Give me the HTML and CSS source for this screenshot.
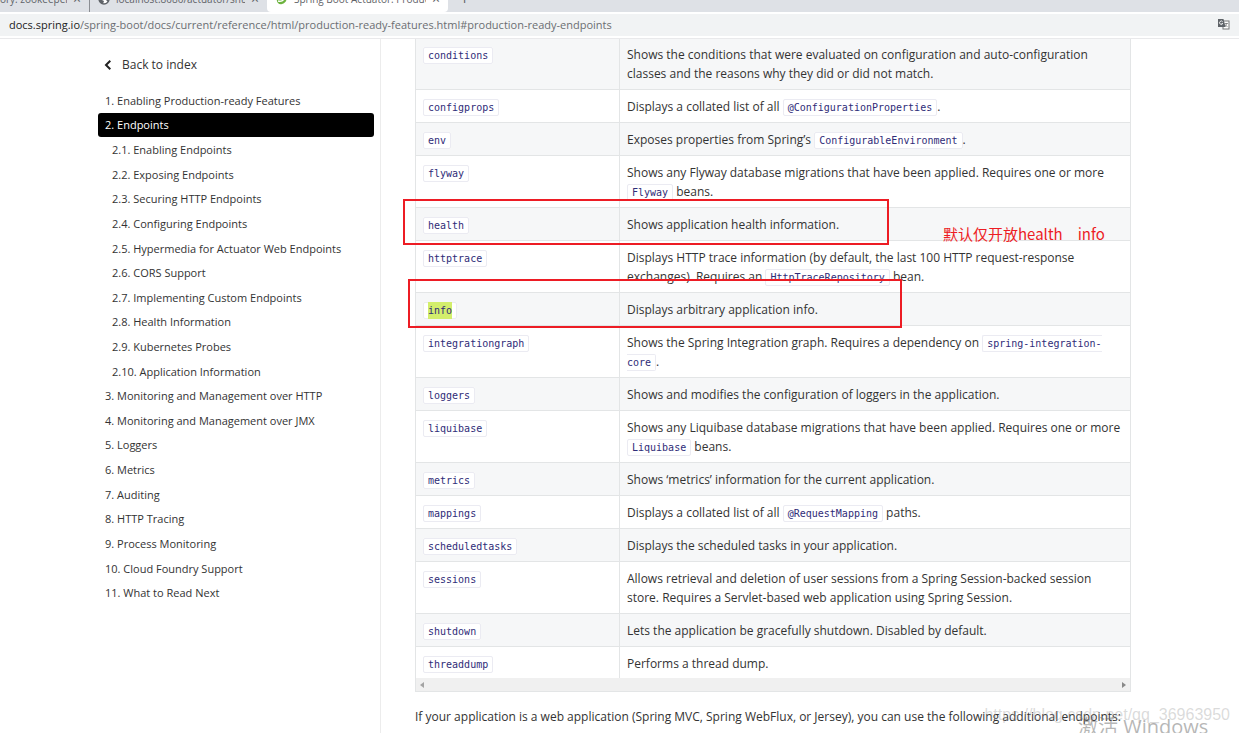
FILE: index.html
```html
<!DOCTYPE html>
<html lang="en">
<head>
<meta charset="utf-8">
<title>Spring Boot Actuator: Production-ready Features</title>
<link rel="stylesheet" href="styles.css">
</head>
<body>
<header class="browser">
  <div class="tabs">
    <div class="tab tab-first"><span class="tab-title">ory: zookeeper</span><span class="close">×</span></div>
    <div class="tab tab-second">
      <svg class="favicon" viewBox="0 0 12 12"><circle cx="6" cy="6" r="5" fill="#fff" stroke="#5f6368" stroke-width="1.4"/><path d="M1 4 L4 7 L6 8 L5 11 A5 5 0 0 1 1 5Z M6 1 L9 2 L11 5 L10 9 L8 7 L7 5 L5 4Z" fill="#5f6368"/></svg>
      <span class="tab-title">localhost:8080/actuator/shutd</span><span class="close">×</span>
    </div>
    <div class="tab tab-active">
      <svg class="favicon" viewBox="0 0 12 12"><path d="M10 1 C12 6 10 10 6 11 C3 12 0 9 1 6 C1 3 4 1 6 2 C8 3 9 2 10 1Z" fill="#6db33f"/><path d="M2 8 C6 9 8 7 9 4" fill="none" stroke="#fff" stroke-width="1.4"/></svg>
      <span class="tab-title">Spring Boot Actuator: Product</span><span class="close">×</span>
    </div>
    <span class="new-tab">+</span>
  </div>
  <div class="address">
    <span class="url"><b class="host">docs.spring.io</b>/spring-boot/docs/current/reference/html/production-ready-features.html#production-ready-endpoints</span>
    <svg class="translate" viewBox="0 0 12 12"><rect x="5" y="3" width="6" height="8" fill="#fff" stroke="#777"/><path d="M6.500 5.500H10M8.500 5C8.500 7 7.500 8 6.500 9M7 6.500L9.500 9" stroke="#777" stroke-width=".8" fill="none"/><path d="M0 1H5.500L7.500 9H0Z" fill="#5f6368"/><path d="M4.700 3.800A1.700 1.700 0 1 0 4.800 5.500H3.500" fill="none" stroke="#fff" stroke-width=".9"/></svg>
  </div>
</header>

<div class="page">
  <nav class="sidebar">
    <a class="back" href="#"><svg class="chevron" viewBox="0 0 8 10"><path d="M6.300 .8L2 5L6.300 9.200" fill="none" stroke="#222" stroke-width="2"/></svg>Back to index</a>
    <ul class="toc">
      <li><a href="#">1. Enabling Production-ready Features</a></li>
      <li class="current"><a href="#">2. Endpoints</a></li>
      <li class="sub"><a href="#">2.1. Enabling Endpoints</a></li>
      <li class="sub"><a href="#">2.2. Exposing Endpoints</a></li>
      <li class="sub"><a href="#">2.3. Securing HTTP Endpoints</a></li>
      <li class="sub"><a href="#">2.4. Configuring Endpoints</a></li>
      <li class="sub"><a href="#">2.5. Hypermedia for Actuator Web Endpoints</a></li>
      <li class="sub"><a href="#">2.6. CORS Support</a></li>
      <li class="sub"><a href="#">2.7. Implementing Custom Endpoints</a></li>
      <li class="sub"><a href="#">2.8. Health Information</a></li>
      <li class="sub"><a href="#">2.9. Kubernetes Probes</a></li>
      <li class="sub"><a href="#">2.10. Application Information</a></li>
      <li><a href="#">3. Monitoring and Management over HTTP</a></li>
      <li><a href="#">4. Monitoring and Management over JMX</a></li>
      <li><a href="#">5. Loggers</a></li>
      <li><a href="#">6. Metrics</a></li>
      <li><a href="#">7. Auditing</a></li>
      <li><a href="#">8. HTTP Tracing</a></li>
      <li><a href="#">9. Process Monitoring</a></li>
      <li><a href="#">10. Cloud Foundry Support</a></li>
      <li><a href="#">11. What to Read Next</a></li>
    </ul>
  </nav>

  <main class="content">
    <div class="table-wrap">
      <table class="endpoints">
        <tbody>
          <tr><td><code>conditions</code></td><td>Shows the conditions that were evaluated on configuration and auto-configuration classes and the reasons why they did or did not match.</td></tr>
          <tr><td><code>configprops</code></td><td>Displays a collated list of all <code>@ConfigurationProperties</code>.</td></tr>
          <tr><td><code>env</code></td><td>Exposes properties from Spring’s <code>ConfigurableEnvironment</code>.</td></tr>
          <tr><td><code>flyway</code></td><td>Shows any Flyway database migrations that have been applied. Requires one or more <code>Flyway</code> beans.</td></tr>
          <tr><td><code>health</code></td><td>Shows application health information.</td></tr>
          <tr><td><code>httptrace</code></td><td>Displays HTTP trace information (by default, the last 100 HTTP request-response exchanges). Requires an <code>HttpTraceRepository</code> bean.</td></tr>
          <tr><td><code><mark>info</mark></code></td><td>Displays arbitrary application info.</td></tr>
          <tr><td><code>integrationgraph</code></td><td>Shows the Spring Integration graph. Requires a dependency on <code>spring-integration-core</code>.</td></tr>
          <tr><td><code>loggers</code></td><td>Shows and modifies the configuration of loggers in the application.</td></tr>
          <tr><td><code>liquibase</code></td><td>Shows any Liquibase database migrations that have been applied. Requires one or more <code>Liquibase</code> beans.</td></tr>
          <tr><td><code>metrics</code></td><td>Shows ‘metrics’ information for the current application.</td></tr>
          <tr><td><code>mappings</code></td><td>Displays a collated list of all <code>@RequestMapping</code> paths.</td></tr>
          <tr><td><code>scheduledtasks</code></td><td>Displays the scheduled tasks in your application.</td></tr>
          <tr><td><code>sessions</code></td><td>Allows retrieval and deletion of user sessions from a Spring Session-backed session store. Requires a Servlet-based web application using Spring Session.</td></tr>
          <tr><td><code>shutdown</code></td><td>Lets the application be gracefully shutdown. Disabled by default.</td></tr>
          <tr><td><code>threaddump</code></td><td>Performs a thread dump.</td></tr>
        </tbody>
      </table>
      <div class="hscroll">
        <svg class="arrow" viewBox="0 0 4 6"><path d="M4 0V6L0 3Z" fill="#a3a3a3"/></svg>
        <svg class="arrow" viewBox="0 0 4 6"><path d="M0 0V6L4 3Z" fill="#888"/></svg>
      </div>
    </div>
    <p class="after">If your application is a web application (Spring MVC, Spring WebFlux, or Jersey), you can use the following additional endpoints:</p>
  </main>
</div>

<div class="outline outline-health"></div>
<div class="outline outline-info"></div>
<div class="note">默认仅开放health&#12288;info</div>
<div class="blog-mark">https://blog.csdn.net/qq_36963950</div>
<div class="os-mark">激活 Windows</div>
</body>
</html>
```

FILE: styles.css
```css
* { box-sizing: border-box; }

body {
  margin: 0;
  height: 100vh;
  overflow: hidden;
  position: relative;
  background: #fff;
  color: #333;
  font: 12px/19px "Open Sans", "Noto Sans CJK SC", sans-serif;
}

a { color: inherit; text-decoration: none; }

/* Browser frame */
.browser { border-bottom: 1px solid #e9e9eb; }

.tabs {
  display: flex;
  align-items: flex-end;
  height: 12px;
  overflow: hidden;
  background: #dee1e6;
  color: #5f6368;
  font-size: 10px;
  line-height: 18px;
}

.tab {
  display: flex;
  align-items: center;
  gap: 6px;
  height: 24px;
  padding: 0 8px 2px;
  flex-shrink: 0;
}
.tab-first { width: 89px; padding-left: 0; }
.tab-second { width: 178px; border-left: 1px solid #8b8e93; }
.tab-active { width: 181px; padding-left: 9px; background: #fff; border-radius: 0 0 4px 4px; }
.tab-title { flex: 1; overflow: hidden; white-space: nowrap; }
.close { font-size: 14px; }
.favicon { width: 12px; height: 12px; flex-shrink: 0; }
.new-tab { height: 22px; padding-left: 12px; font-size: 16px; }

.address {
  display: flex;
  align-items: center;
  justify-content: space-between;
  height: 26px;
  padding: 0 9px 2px;
  background: #f1f3f4;
  border-top: 2px solid #fff;
  border-bottom: 2px solid #fff;
  color: #6b6e72;
  font-size: 11px;
}
.host { color: #222; font-weight: 400; }
.translate { width: 12px; height: 12px; }

/* Page */
.page { display: flex; min-height: calc(100vh - 39px); }

.sidebar {
  width: 381px;
  flex-shrink: 0;
  padding: 16px 6px 0 98px;
  border-right: 1px solid #ececec;
}
.back { display: flex; align-items: center; gap: 10px; padding-left: 6px; }
.chevron { width: 8px; height: 10px; }

.toc {
  display: grid;
  grid-auto-rows: 1fr;
  height: 517px;
  margin: 14px 0 0;
  padding: 0;
  list-style: none;
  font-size: 11px;
}
.toc li { display: flex; align-items: center; padding-left: 7px; border-radius: 3px; }
.toc .sub { padding-left: 14px; }
.toc .current { background: #000; color: #fff; }

.content { flex: 1; min-width: 0; padding: 0 108px 0 34px; }

.table-wrap { border: 1px solid #e3e5e6; border-top: 0; }

.endpoints { width: 100%; border-collapse: separate; border-spacing: 0; table-layout: fixed; }
.endpoints td { padding: 7px 8px 6px 7px; border-bottom: 1px solid #e3e5e6; vertical-align: top; }
.endpoints td:first-child { width: 204px; border-right: 1px solid #e3e5e6; }
.endpoints tr:nth-child(odd) { background: #f6f7f8; }
.endpoints tr:first-child td { padding-top: 6px; }
.endpoints tr:last-child td { padding-bottom: 5px; border-bottom: 0; }

code {
  padding: 2px 4px;
  border: 1px solid #ebebf2;
  border-radius: 2px;
  background: #fff;
  color: #2f2c78;
  font: 10px/12px "DejaVu Sans Mono", monospace;
}
mark { padding: 3px 0; background: #d3ee6c; color: inherit; }

.hscroll {
  display: flex;
  align-items: center;
  justify-content: space-between;
  height: 13px;
  padding: 0 4px;
  background: #f0f0f0;
}
.arrow { width: 4px; height: 6px; }

.after { margin: 15px 0 0; white-space: nowrap; }

/* Annotations and watermarks */
.outline { position: absolute; border: 2px solid #ed1c24; }
.outline-health { left: 403px; top: 199px; width: 486px; height: 46px; }
.outline-info { left: 408px; top: 279px; width: 494px; height: 49px; }

.note {
  position: absolute;
  left: 943px;
  top: 224px;
  color: #ed1c24;
  font-family: "Noto Sans CJK SC", sans-serif;
  font-size: 15px;
}
.blog-mark {
  position: absolute;
  right: 9px;
  top: 705px;
  color: rgba(150, 150, 150, .35);
  font-family: "Liberation Sans", sans-serif;
  font-size: 16px;
}
.os-mark {
  position: absolute;
  left: 1078px;
  top: 717px;
  color: rgba(110, 110, 110, .5);
  font-family: "Open Sans", "Noto Sans CJK SC", sans-serif;
  font-size: 20px;
}
```
